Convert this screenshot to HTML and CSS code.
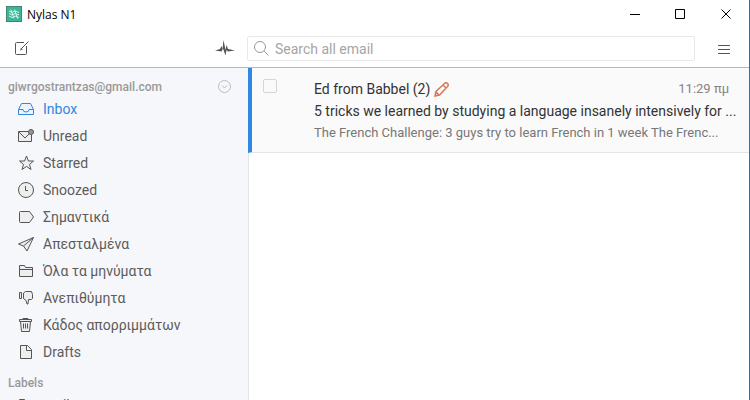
FILE: index.html
```html
<!DOCTYPE html>
<html lang="el">
<head>
  <meta charset="UTF-8" />
  <meta name="viewport" content="width=device-width, initial-scale=1.0" />
  <title>Nylas N1</title>
  <link rel="stylesheet" href="styles.css">
</head>
<body>
  <div class="window">
    <header class="titlebar">
      <svg class="app-logo" width="16" height="16" viewBox="0 0 16 16">
        <rect width="16" height="16" fill="#3bb497"/>
        <path d="M3 5l3 1.500L9 5l4 1.500M3 7.500L6 9l3-1.500L13 9M3 10l3 1.500L9 10l4 1.500M5 3.500l3 9M8.500 3.500l3 9" fill="none" stroke="#d9f3ea"/>
      </svg>
      <span class="app-name">Nylas N1</span>
      <div class="window-controls">
        <button aria-label="Minimize"><svg width="11" height="11" viewBox="0 0 11 11"><path d="M1 5.500h10"/></svg></button>
        <button aria-label="Maximize"><svg width="11" height="11" viewBox="0 0 11 11"><path d="M.5.5h9v9h-9z"/></svg></button>
        <button aria-label="Close"><svg width="11" height="11" viewBox="0 0 11 11"><path d="M.5 .5l9 9M9.500 .5l-9 9"/></svg></button>
      </div>
    </header>

    <div class="toolbar">
      <div class="toolbar-left">
        <button aria-label="Compose">
          <svg width="14" height="14" viewBox="0 0 14 14"><path d="M9 1.500H1.500a1 1 0 0 0-1 1v10a1 1 0 0 0 1 1h9a1 1 0 0 0 1-1V5"/><path d="M13.500 .5L6.500 7.500"/><path d="M5 9.500l1-3 2 2z" fill="#666" stroke="none"/></svg>
        </button>
        <button aria-label="Activity">
          <svg width="20" height="16" viewBox="0 0 20 16"><path d="M0 10.500l5-1.500 1.500-3L7.500 9 8.500 0l2 10L11.500 5l1.500 4 7 1.500-7 1-1.500-1.500-1 5.500L8 8.500 6.500 11.500z" fill="#555" stroke="none"/></svg>
        </button>
      </div>
      <div class="toolbar-right">
        <label class="search">
          <svg width="15" height="15" viewBox="0 0 15 15"><circle cx="6" cy="6" r="5.500"/><path d="M10 10l4.500 4.500"/></svg>
          <input type="search" aria-label="Search all email" placeholder="Search all email">
        </label>
        <button aria-label="Menu">
          <svg width="12" height="10" viewBox="0 0 12 10"><path d="M0 1.500h12M0 5.500h12M0 9.500h12"/></svg>
        </button>
      </div>
    </div>

    <main class="content">
      <nav class="sidebar">
        <div class="account">
          <span>giwrgostrantzas@gmail.com</span>
          <button aria-label="Collapse account">
            <svg width="13" height="13" viewBox="0 0 13 13"><circle cx="6.500" cy="6.500" r="6"/><path d="M4 5.500L6.500 8 9 5.500"/></svg>
          </button>
        </div>
        <ul class="folders">
          <li><a class="active" href="#"><svg viewBox="0 0 16 16"><path d="M.5 8.500L3.500 2.500h9l3 6v5H.5zM.5 8.500H5a3 2.500 0 0 0 6 0h4.500"/></svg>Inbox</a></li>
          <li><a href="#"><svg viewBox="0 0 16 16"><path d="M10 3.500H.5v10h13V7M1 4l6 6 4-4"/><circle class="dot" cx="13" cy="4" r="2.500"/></svg>Unread</a></li>
          <li><a href="#"><svg viewBox="0 0 16 16"><path d="M8.500 1l2 5h5l-4 3.500 1.500 5-4.500-3-4.500 3 1.500-5-4-3.500h5z"/></svg>Starred</a></li>
          <li><a href="#"><svg viewBox="0 0 16 16"><circle cx="8" cy="8" r="7.500"/><path d="M7.500 4v4.500H10"/></svg>Snoozed</a></li>
          <li><a href="#"><svg viewBox="0 0 16 16"><path d="M1.500 3.500a1 1 0 0 1 1-1h9l4 5.500-4 5.500h-9a1 1 0 0 1-1-1z"/></svg>Σημαντικά</a></li>
          <li><a href="#"><svg viewBox="0 0 16 16"><path d="M15.500 1.500L.5 8l5 2 3.500 5zM15.500 1.500l-10 8.500"/></svg>Απεσταλμένα</a></li>
          <li><a href="#"><svg viewBox="0 0 16 16"><path d="M1.500 13.500v-11h5l1 2h7v9zM1.500 6.500h13"/></svg>Όλα τα μηνύματα</a></li>
          <li><a href="#"><svg viewBox="0 0 16 16"><path d="M1.500 2.500h2v6h-2zM5.500 3l2-1.500h6l1 3v4l-1 1h-3l-.5 4.500H9l-1-3.500-2.500-2z"/></svg>Ανεπιθύμητα</a></li>
          <li><a href="#"><svg viewBox="0 0 16 16"><path d="M1.500 2.500h12v2h-12zM5 2.500v-1h5v1M2.500 4.500l1 10h8l1-10M5.500 6.500v5M7.500 6.500v5M9.500 6.500v5"/></svg>Κάδος απορριμμάτων</a></li>
          <li><a href="#"><svg viewBox="0 0 16 16"><path d="M2.500 1.500h7l4 4v9h-11zM8.500 1.500v5h5"/></svg>Drafts</a></li>
        </ul>
        <h2 class="section-title">Labels</h2>
        <ul class="folders">
          <li><a href="#"><svg viewBox="0 0 16 16"><path d="M1.500 13.500v-11h5l1 2h7v9zM1.500 6.500h13"/></svg>mail</a></li>
        </ul>
      </nav>

      <section class="threads">
        <article class="thread">
          <input type="checkbox" aria-label="Select thread">
          <div class="thread-body">
            <div class="thread-top">
              <span class="sender">Ed from Babbel (2)</span>
              <svg class="pencil" width="15" height="15" viewBox="0 0 15 15"><path d="M1 14l1-4.500L10.500 1.500a2 2 0 0 1 3 3L5.500 13zM9 3l3 3M2 10l3 3"/></svg>
              <time>11:29 πμ</time>
            </div>
            <div class="subject">5 tricks we learned by studying a language insanely intensively for ...</div>
            <div class="snippet">The French Challenge: 3 guys try to learn French in 1 week The Frenc...</div>
          </div>
        </article>
      </section>
    </main>
  </div>
</body>
</html>
```

FILE: styles.css
```css
* {
  box-sizing: border-box;
}
body {
  margin: 0;
  font-family: Roboto, "Noto Sans", sans-serif;
  font-size: 14px;
  color: #333;
  background: #fff;
}
button {
  display: flex;
  align-items: center;
  justify-content: center;
  padding: 0;
  border: 0;
  background: none;
}
svg {
  flex: none;
  fill: none;
  stroke: #555;
}
ul {
  margin: 0;
  padding: 0;
  list-style: none;
}
.window {
  display: flex;
  flex-direction: column;
  height: 100vh;
  overflow: hidden;
  border-right: 1px solid #1976c5;
}
.titlebar {
  display: flex;
  align-items: center;
  gap: 5px;
  height: 28px;
  padding-left: 6px;
  font-family: "Open Sans", sans-serif;
  font-size: 12px;
  color: #000;
}
.window-controls {
  display: flex;
  margin-left: auto;
}
.window-controls button {
  width: 46px;
  height: 28px;
}
.window-controls svg {
  stroke: #000;
}
.toolbar {
  display: flex;
  height: 40px;
  border-bottom: 1px solid #b5b8ba;
}
.toolbar-left {
  display: flex;
  align-items: center;
  justify-content: space-between;
  width: 247px;
  padding: 0 12px 0 15px;
}
.toolbar-right {
  display: flex;
  flex: 1;
  align-items: center;
  padding: 2px 19px 0 0;
}
.search {
  display: flex;
  flex: 1;
  align-items: center;
  gap: 6px;
  height: 25px;
  margin-right: 23px;
  padding-left: 6px;
  border: 1px solid #e8e8e8;
  border-radius: 2px;
}
.search svg {
  stroke: #999;
}
.search input {
  flex: 1;
  padding: 0;
  border: 0;
  outline: 0;
  font: inherit;
  background: none;
}
.search input::placeholder {
  color: #a5a5a5;
}
.content {
  display: flex;
  flex: 1;
  min-height: 0;
}
.sidebar {
  width: 249px;
  padding-top: 10px;
  overflow: hidden;
  border-right: 1px solid #e4e5e6;
  background: #f6f7fa;
}
.account {
  display: flex;
  align-items: center;
  justify-content: space-between;
  height: 17px;
  padding: 0 17px 0 8px;
  font-size: 12px;
  font-weight: 500;
  line-height: 16px;
  color: #999;
}
.account svg {
  stroke: #bbb;
}
.folders a {
  display: flex;
  align-items: center;
  gap: 9px;
  height: 27px;
  padding-left: 18px;
  line-height: 18px;
  color: #5c5c5c;
  text-decoration: none;
}
.folders svg {
  width: 16px;
  height: 16px;
  fill: #eeeeef;
}
.folders .dot {
  fill: #999;
}
.folders .active {
  color: #3187e1;
}
.folders .active svg {
  fill: #eaf3fc;
  stroke: #3187e1;
}
.section-title {
  margin: 10px 0 0;
  padding-left: 8px;
  font-size: 12px;
  font-weight: 500;
  line-height: 16px;
  color: #999;
}
.threads {
  flex: 1;
  min-width: 0;
}
.thread {
  display: flex;
  gap: 37px;
  height: 85px;
  margin-left: -1px;
  padding: 10px 12px 0 11px;
  border-bottom: 1px solid #e4e5e6;
  border-left: 4px solid #3187e1;
  background: #fafafa;
}
.thread input {
  appearance: none;
  flex: none;
  width: 14px;
  height: 14px;
  margin: 1px 0 0;
  border: 1px solid #d5d5d5;
  border-radius: 2px;
}
.thread-body {
  flex: 1;
  min-width: 0;
  line-height: 22px;
  white-space: nowrap;
}
.thread-top {
  display: flex;
  align-items: center;
  gap: 4px;
  padding-right: 8px;
}
.pencil {
  stroke: #d97757;
  stroke-width: 1.5;
}
.thread time {
  margin-left: auto;
  font-size: 13px;
  color: #858585;
}
.subject,
.snippet {
  overflow: hidden;
  text-overflow: ellipsis;
}
.snippet {
  font-size: 13px;
  color: #777;
}
```
